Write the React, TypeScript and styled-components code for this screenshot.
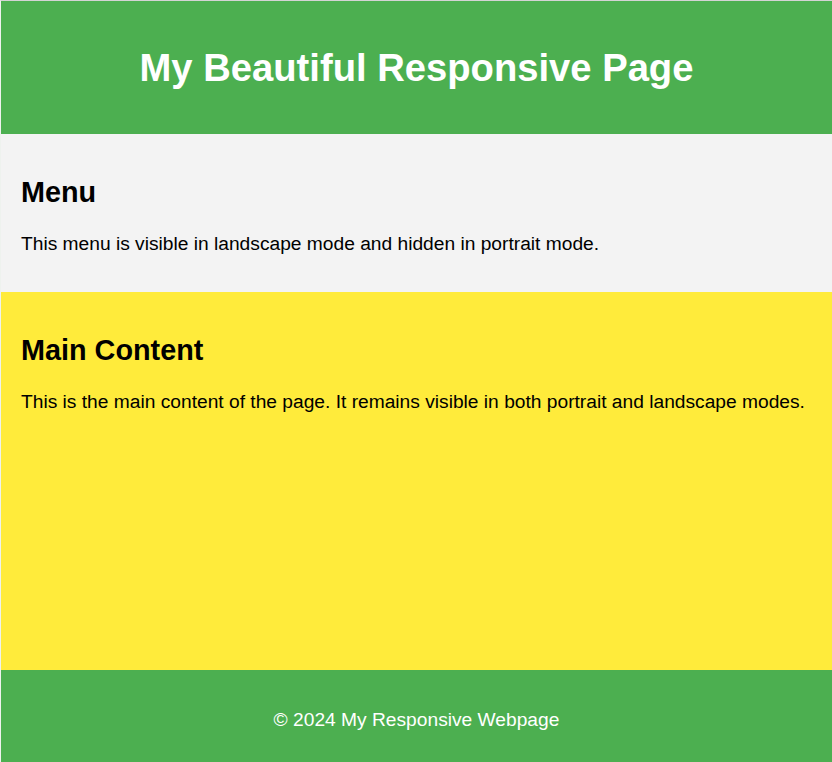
import React from 'react';
import styled, { createGlobalStyle } from 'styled-components';

const GlobalStyle = createGlobalStyle`
  html, body {
    margin: 0;
    padding: 0;
  }
  body {
    font-family: 'Liberation Sans', Arial, sans-serif;
    background-color: #ffffff;
  }
`;

const Page = styled.div`
  display: flex;
  flex-direction: column;
  min-height: 761px;
  border-top: 1px solid #d4d4d4;
  border-left: 1px solid #eef2ee;
`;

const Header = styled.header`
  background-color: #4caf50;
  color: #ffffff;
  text-align: center;
  height: 133px;
  display: flex;
  align-items: center;
  justify-content: center;
`;

const Title = styled.h1`
  margin: 0;
  font-size: 38.2px;
  font-weight: bold;
`;

const Section = styled.section<{ $bg: string; $grow?: boolean }>`
  background-color: ${(p) => p.$bg};
  padding: 20px;
  flex: ${(p) => (p.$grow ? 1 : 'none')};
`;

const Heading = styled.h2`
  margin: 22px 0 0;
  font-size: 28.8px;
  font-weight: bold;
  line-height: 33px;
  color: #000;
`;

const Text = styled.p`
  margin: 24px 0 17px;
  font-size: 19.2px;
  line-height: 22px;
  color: #000;
`;

const Footer = styled.footer`
  background-color: #4caf50;
  color: #ffffff;
  text-align: center;
  height: 92px;
  display: flex;
  align-items: center;
  justify-content: center;
  font-size: 19.2px;
  padding-top: 8px;
  box-sizing: border-box;
`;

const App = () => {
  return (
    <Page>
      <GlobalStyle />
      <Header>
        <Title>My Beautiful Responsive Page</Title>
      </Header>
      <Section $bg="#f3f3f3">
        <Heading>Menu</Heading>
        <Text>This menu is visible in landscape mode and hidden in portrait mode.</Text>
      </Section>
      <Section $bg="#ffeb3b" $grow>
        <Heading>Main Content</Heading>
        <Text>
          This is the main content of the page. It remains visible in both portrait and landscape
          modes.
        </Text>
      </Section>
      <Footer>© 2024 My Responsive Webpage</Footer>
    </Page>
  );
};

export default App;
